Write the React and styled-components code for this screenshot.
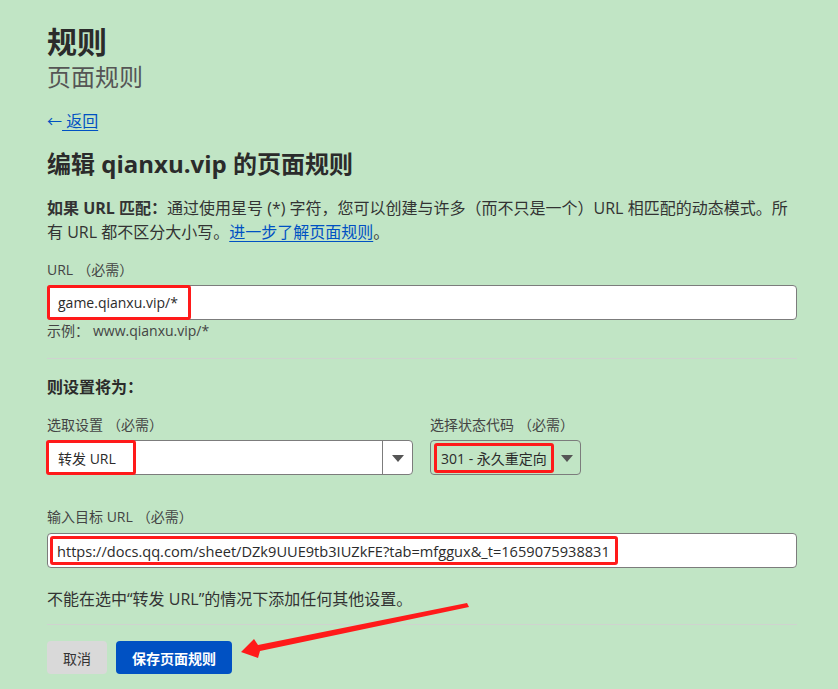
import React from 'react'
import styled, { createGlobalStyle } from 'styled-components'

const GlobalStyle = createGlobalStyle`
  html, body {
    margin: 0;
    padding: 0;
    background: #c1e5c5;
  }
  body {
    font-family: "Open Sans", "Noto Sans CJK SC", sans-serif;
    color: #313131;
  }
`

const Page = styled.div`
  position: relative;
  width: 838px;
  height: 689px;
  overflow: hidden;
  box-sizing: border-box;
  padding: 24px 0 0 47px;
`

const Content = styled.div`
  width: 750px;
`

const Title = styled.h1`
  margin: 0;
  font-size: 30px;
  line-height: 36px;
  font-weight: 700;
  color: #2b2b2b;
`

const Subtitle = styled.div`
  margin-top: 2px;
  font-size: 24px;
  line-height: 30px;
  color: #555;
`

const BackRow = styled.div`
  display: flex;
  align-items: center;
  margin-top: 19px;
  height: 20px;
  font-size: 16px;
  line-height: 20px;
  color: #0051c3;
`

const BackArrow = styled.span`
  font-size: 15px;
`

const BackLink = styled.a`
  color: #0051c3;
  text-decoration: underline;
  text-underline-offset: 3px;
  white-space: pre;
`

const Heading = styled.h2`
  margin: 18px 0 0;
  font-size: 24px;
  line-height: 30px;
  font-weight: 700;
  color: #2b2b2b;
`

const Intro = styled.p`
  margin: 17px 0 0;
  font-size: 16px;
  line-height: 24px;
  white-space: nowrap;
  color: #333;
  strong { font-weight: 700; }
  a { color: #0051c3; text-decoration: underline; text-underline-offset: 3px; }
`

const Label = styled.div`
  margin-top: ${p => p.$top || 16}px;
  font-size: 14px;
  line-height: 18px;
  color: #444;
  span { margin-left: 4px; }
`

const Field = styled.div`
  display: flex;
  align-items: stretch;
  box-sizing: border-box;
  margin-top: ${p => p.$top || 6}px;
  width: ${p => p.$width || 750}px;
  height: 35px;
  background: ${p => (p.$clear ? 'transparent' : '#fff')};
  border: 1px solid #7c7c7c;
  border-radius: 4px;
`

const Marked = styled.span`
  display: flex;
  align-items: center;
  box-sizing: border-box;
  flex: none;
  width: ${p => p.$w}px;
  height: ${p => p.$h}px;
  align-self: center;
  margin-left: ${p => p.$ml || 0}px;
  padding-left: ${p => p.$pl || 8}px;
  border: 3px solid #ff1a1a;
  border-radius: 3px;
  white-space: nowrap;
  overflow: hidden;
  color: #2b2b2b;
  font-size: ${p => p.$fs || 14}px;
`

const Hint = styled.div`
  margin-top: 2px;
  font-size: 14px;
  line-height: 18px;
  color: #444;
  span { margin-left: 4px; }
`

const Divider = styled.hr`
  margin: ${p => p.$top}px 0 0;
  border: 0;
  height: 1px;
  background: #cfd3cf;
`

const SubHeading = styled.div`
  margin-top: 17px;
  font-size: 16px;
  line-height: 22px;
  font-weight: 700;
  color: #2b2b2b;
`

const SelectRow = styled.div`
  display: flex;
  gap: 17px;
`

const SelectGroup = styled.div`
  display: flex;
  flex-direction: column;
`

const SelectMain = styled.div`
  flex: 1;
  display: flex;
  align-items: stretch;
  background: ${p => (p.$clear ? 'transparent' : '#fff')};
  border-radius: 3px 0 0 3px;
`

const Caret = styled.div`
  width: 29px;
  display: flex;
  align-items: center;
  justify-content: center;
  border-left: ${p => (p.$bare ? 'none' : '1px solid #7c7c7c')};
  &::after {
    content: '';
    border-left: 6px solid transparent;
    border-right: 6px solid transparent;
    border-top: 7px solid #555;
    margin-top: 2px;
  }
`

const Note = styled.p`
  margin: 20px 0 0;
  font-size: 16px;
  line-height: 22px;
  color: #333;
`

const Actions = styled.div`
  display: flex;
  gap: 9px;
  margin-top: 16px;
`

const Button = styled.button`
  height: 33px;
  padding: 0 16px;
  border: 0;
  border-radius: 4px;
  font-family: inherit;
  font-size: 14px;
  font-weight: ${p => (p.$primary ? 600 : 400)};
  background: ${p => (p.$primary ? '#0051c3' : '#d9d9d9')};
  color: ${p => (p.$primary ? '#fff' : '#333')};
`

const Overlay = styled.svg`
  position: absolute;
  left: 0;
  top: 0;
  pointer-events: none;
`

export default function App() {
  return (
    <Page>
      <GlobalStyle />
      <Content>
        <Title>规则</Title>
        <Subtitle>页面规则</Subtitle>
        <BackRow>
          <BackArrow>←</BackArrow>
          <BackLink href="#"> 返回</BackLink>
        </BackRow>
        <Heading>编辑 qianxu.vip 的页面规则</Heading>
        <Intro>
          <strong>如果 URL 匹配：</strong>通过使用星号 (*) 字符，您可以创建与许多（而不只是一个）URL 相匹配的动态模式。所
          <br />
          有 URL 都不区分大小写。<a href="#">进一步了解页面规则</a>。
        </Intro>

        <Label $top={17}>URL<span>（必需）</span></Label>
        <Field>
          <Marked $ml={-1} $w={144} $h={35}>game.qianxu.vip/*</Marked>
        </Field>
        <Hint>示例：<span>www.qianxu.vip/*</span></Hint>

        <Divider $top={18} />
        <SubHeading>则设置将为：</SubHeading>

        <SelectRow>
          <SelectGroup>
            <Label $top={18}>选取设置<span>（必需）</span></Label>
            <Field $width={366}>
              <SelectMain>
                <Marked $ml={-2} $pl={9} $w={90} $h={35}>转发 URL</Marked>
              </SelectMain>
              <Caret />
            </Field>
          </SelectGroup>
          <SelectGroup>
            <Label $top={18}>选择状态代码<span>（必需）</span></Label>
            <Field $width={151} $clear>
              <SelectMain $clear>
                <Marked $ml={3} $pl={4} $w={120} $h={30}>301 - 永久重定向</Marked>
              </SelectMain>
              <Caret $bare />
            </Field>
          </SelectGroup>
        </SelectRow>

        <Label $top={33}>输入目标 URL<span>（必需）</span></Label>
        <Field $top={7}>
          <Marked $ml={2} $pl={4} $w={568} $h={29} $fs={14.6}>
            https://docs.qq.com/sheet/DZk9UUE9tb3IUZkFE?tab=mfggux&amp;_t=1659075938831
          </Marked>
        </Field>

        <Note>不能在选中“转发 URL”的情况下添加任何其他设置。</Note>
        <Divider $top={14} />

        <Actions>
          <Button>取消</Button>
          <Button $primary>保存页面规则</Button>
        </Actions>
      </Content>

      <Overlay width="838" height="689" viewBox="0 0 838 689">
        <polygon
          points="241,652 254,639 258,645 467,603 469,607 260,651 258,658"
          fill="#ff1a1a"
        />
      </Overlay>
    </Page>
  )
}
